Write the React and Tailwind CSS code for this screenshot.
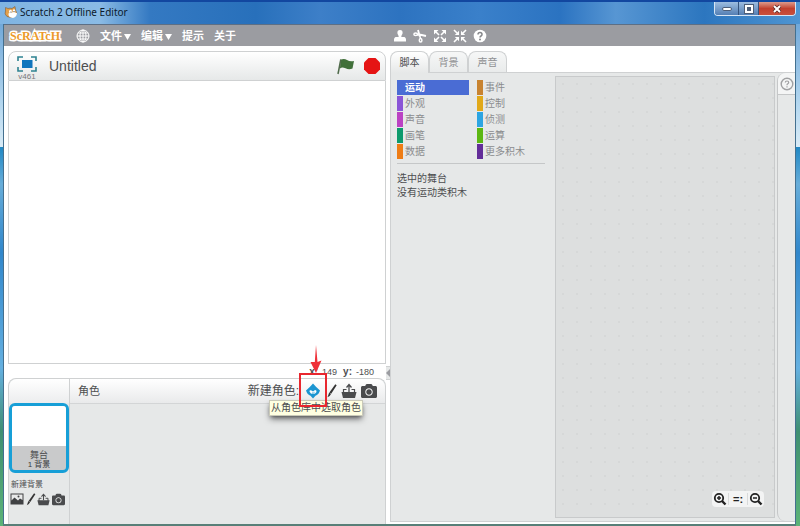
import React, { useState } from "react";
import { FaCamera } from "react-icons/fa";

const leftCategories = [
    { name: "运动", color: "bg-[#4a6cd4]" },
    { name: "外观", color: "bg-[#8a55d7]" },
    { name: "声音", color: "bg-[#bb42c3]" },
    { name: "画笔", color: "bg-[#0e9a6c]" },
    { name: "数据", color: "bg-[#ee7d16]" },
];

const rightCategories = [
    { name: "事件", color: "bg-[#c88330]" },
    { name: "控制", color: "bg-[#e1a91a]" },
    { name: "侦测", color: "bg-[#2ca5e2]" },
    { name: "运算", color: "bg-[#5cb712]" },
    { name: "更多积木", color: "bg-[#632d99]" },
];

const tabs = ["脚本", "背景", "声音"];

function CatIcon() {
    return (
        <svg viewBox="0 0 14 14" className="h-3.5 w-3.5">
            <path d="M1.500 2.500L4 3.500Q6 2.800 8 3.500L11 1.500L11.500 5Q14 8.500 11.500 11Q7 13.500 3 11.500Q0 9 1.500 6Z" fill="#e3a04a" stroke="#7a5a3a" strokeWidth=".6" />
            <path d="M4.500 8.500Q8 6.500 13 8Q13 12 9 13Q4 12.500 4.500 8.500Z" fill="#fff" />
            <ellipse cx="6.500" cy="6.500" rx="1.500" ry="1.800" fill="#fff" />
            <ellipse cx="10" cy="6" rx="1.300" ry="1.700" fill="#fff" />
            <circle cx="7" cy="7" r=".6" fill="#333" />
            <circle cx="10" cy="6.500" r=".6" fill="#333" />
        </svg>
    );
}

function GlobeIcon() {
    return (
        <svg viewBox="0 0 14 14" className="h-3.5 w-3.5" fill="none" stroke="#fff" strokeWidth="1">
            <circle cx="7" cy="7" r="6" />
            <ellipse cx="7" cy="7" rx="3" ry="6" />
            <path d="M7 1V13M1 7H13M2 4H12M2 10H12" />
        </svg>
    );
}

function DownArrow() {
    return (
        <svg viewBox="0 0 7 6" className="h-1.5 w-[7px]">
            <path d="M0 0H7L3.5 6Z" fill="#fff" />
        </svg>
    );
}

function StampIcon() {
    return (
        <svg viewBox="0 0 14 14" className="h-3.5 w-3.5" fill="#fff">
            <path d="M7 1a2.7 2.7 0 0 1 2.6 2.9C9.6 5.4 8.3 5.6 8.3 8H11.500Q13 8.500 13 10.500V12.500H1V10.500Q1 8.500 2.500 8H5.700C5.700 5.600 4.400 5.400 4.400 3.900A2.700 2.700 0 0 1 7 1Z" />
        </svg>
    );
}

function ScissorsIcon() {
    return (
        <svg viewBox="0 0 14 14" className="h-3.5 w-3.5" fill="none" stroke="#fff" strokeWidth="1.500">
            <path d="M5 1 L6.800 7.500 M13 7 L6.500 5.500" strokeWidth="1.800" />
            <path d="M6.800 6 L4 5.800 M6.800 7 L7.500 9.500" />
            <ellipse cx="2.700" cy="5.200" rx="1.800" ry="1.300" />
            <ellipse cx="7.600" cy="11.200" rx="1.300" ry="1.800" />
        </svg>
    );
}

function GrowIcon() {
    return (
        <svg viewBox="0 0 14 14" className="h-3.5 w-3.5">
            <path d="M3 3L6 6M11 3L8 6M3 11L6 8M11 11L8 8" stroke="#fff" strokeWidth="1.600" />
            <path d="M1 1H5.500L1 5.500ZM13 1V5.500L8.500 1ZM1 13V8.500L5.500 13ZM13 13H8.500L13 8.500Z" fill="#fff" />
        </svg>
    );
}

function ShrinkIcon() {
    return (
        <svg viewBox="0 0 14 14" className="h-3.5 w-3.5">
            <path d="M1 1L4 4M13 1L10 4M1 13L4 10M13 13L10 10" stroke="#fff" strokeWidth="1.600" />
            <path d="M6 6H1.800L6 1.800ZM8 6V1.800L12.200 6ZM6 8V12.200L1.800 8ZM8 8H12.200L8 12.200Z" fill="#fff" />
        </svg>
    );
}

function HelpIcon() {
    return (
        <svg viewBox="0 0 14 14" className="h-3.5 w-3.5">
            <circle cx="7" cy="7" r="6.300" fill="#fff" />
            <path d="M5 5.600Q5 3.600 7 3.600T9 5.400Q9 6.400 8 7T7 8.600" fill="none" stroke="#85868a" strokeWidth="1.500" />
            <circle cx="7" cy="10.500" r="1" fill="#85868a" />
        </svg>
    );
}

function FullScreenIcon() {
    return (
        <svg viewBox="0 0 20 16" className="h-4 w-5">
            <path d="M1 5V1H6M14 1H19V5M19 11V15H14M6 15H1V11" fill="none" stroke="#2e8391" strokeWidth="1.600" />
            <rect x="5" y="4" width="10.500" height="8" fill="#0f75bd" />
        </svg>
    );
}

function FlagIcon() {
    return (
        <svg viewBox="0 0 18 17" className="h-[17px] w-[18px]">
            <path d="M3.500 1.800Q7 0 10 2T17 3L15.500 10.500Q12 12 8.500 10.300T3 10.500Z" fill="#41703a" />
            <path d="M3.800 1.500L1 16" stroke="#4f6a4a" strokeWidth="1.500" />
        </svg>
    );
}

function StopIcon() {
    return (
        <svg viewBox="0 0 18 18" className="h-[18px] w-[18px]">
            <path d="M5.500 1H12.500L17 5.500V12.500L12.500 17H5.500L1 12.500V5.500Z" fill="#e51414" />
        </svg>
    );
}

function SpriteIcon() {
    return (
        <svg viewBox="0 0 16 16" className="h-4 w-4">
            <path d="M8 0.500L11.200 4L15 7.500Q13.500 12 10.500 12.700L8 15.500L5.500 12.700Q2.500 12 1 7.500L4.800 4Z" fill="#1b95d1" />
            <path d="M4.500 8.500Q4.500 6.500 6.500 7.500L8 8.500L10 7Q11.800 7 11.500 9Q10.500 11 8 11T4.500 8.500Z" fill="#fff" />
            <path d="M7 10Q8.500 10.500 9.500 9.300" fill="none" stroke="#1b95d1" strokeWidth=".8" />
        </svg>
    );
}

function BrushIcon({ className }) {
    return (
        <svg viewBox="0 0 10 14" className={className}>
            <path d="M8.300 0.300L9.700 1.300L4.200 9.700L2.400 8.500Z" fill="#333" />
            <path d="M2.200 8.600L4 9.900Q3 12 0.500 13.300Z" fill="#333" />
        </svg>
    );
}

function UploadIcon({ className }) {
    return (
        <svg viewBox="0 0 16 16" className={className}>
            <path d="M8 9V2.500M5.500 4.500L8 1.500L10.500 4.500" fill="none" stroke="#4a4b4d" strokeWidth="1.300" />
            <path d="M5.500 6.500H2.500V10M10.500 6.500H13.500V10" fill="none" stroke="#4a4b4d" strokeWidth="1.200" />
            <path d="M.5 9H15.500L14 15H2Z" fill="#4a4b4d" />
        </svg>
    );
}

function PictureIcon() {
    return (
        <svg viewBox="0 0 14 12" className="h-3 w-3.5">
            <rect x=".5" y=".5" width="13" height="11" fill="#404143" />
            <path d="M1.500 1.500H12.500V7L10 5.500L8 7.500L4.500 4.500L1.500 7.500Z" fill="#e9eaea" />
            <circle cx="8.500" cy="3.500" r="1" fill="#404143" />
        </svg>
    );
}

function ZoomIcon({ plus }) {
    return (
        <svg viewBox="0 0 14 14" className="h-3.5 w-3.5" fill="none" stroke="#222">
            <circle cx="6" cy="6" r="4.200" strokeWidth="1.800" />
            <path d="M9 9L12.500 12.500" strokeWidth="2.400" />
            <path d={plus ? "M4 6H8M6 4V8" : "M4 6H8"} strokeWidth="1.500" />
        </svg>
    );
}

function TitleBar() {
    return (
        <header className="flex h-6 items-start justify-between border-t-2 border-[#1247a0] bg-[linear-gradient(90deg,#7fb4e2_0,#8abbe5_100px,#3479c2_150px,#2870bb_32%,#3d7fc8_40%,#2d73c0_50%,#3a80ca_60%,#2b73c1_70%,#5796d3_77%,#2c76bf_88%,#4f95d2_100%)] pl-1">
            <h1 className="flex h-5 items-center gap-0.5 font-['Noto_Sans',sans-serif] text-[10px] text-[#0c1a2c]">
                <CatIcon />
                Scratch 2 Offline Editor
            </h1>
            <div className="mr-1 flex h-3.5 overflow-hidden rounded-b border border-t-0 border-[#d7e6f5]">
                <button aria-label="Minimize" className="flex w-6 items-center justify-center border-r border-[#35537c] bg-gradient-to-b from-[#9dbde0] to-[#547fb4]">
                    <span className="h-1 w-2.5 rounded-sm border border-[#4d5e78] bg-white" />
                </button>
                <button aria-label="Maximize" className="flex w-5 items-center justify-center border-r border-[#35537c] bg-gradient-to-b from-[#9dbde0] to-[#547fb4]">
                    <span className="h-2 w-2 border-2 border-white bg-[#4d5e78] outline outline-[#4d5e78]" />
                </button>
                <button aria-label="Close" className="flex w-9 items-center justify-center bg-gradient-to-b from-[#dc9a8c] via-[#c2402e] to-[#c9503c]">
                    <svg viewBox="0 0 10 10" className="h-2.5 w-2.5">
                        <path d="M2 2L8 8M8 2L2 8" stroke="#5c2a28" strokeWidth="3.600" />
                        <path d="M2 2L8 8M8 2L2 8" stroke="#fff" strokeWidth="2" />
                    </svg>
                </button>
            </div>
        </header>
    );
}

function MenuBar() {
    return (
        <nav className="flex h-[22px] shrink-0 items-center border-t border-[#5d6f85] bg-[#9b9ca1] text-[11px] font-bold text-white">
            <div className="flex w-[389px] shrink-0 items-center pl-1.5">
                <span className="w-[66px] font-['Liberation_Serif',serif] text-xs text-[#ec9a2a] [-webkit-text-stroke:3px_#fff] [paint-order:stroke_fill]">
                    ScRATcH
                </span>
                <button aria-label="语言" className="mr-2.5"><GlobeIcon /></button>
                <button className="mr-2.5 flex items-center gap-0.5 pt-0.5">文件<DownArrow /></button>
                <button className="mr-2.5 flex items-center gap-0.5 pt-0.5">编辑<DownArrow /></button>
                <button className="mr-2.5 pt-0.5">提示</button>
                <button className="pt-0.5">关于</button>
            </div>
            <div className="flex items-center gap-1.5">
                <button aria-label="复制"><StampIcon /></button>
                <button aria-label="删除"><ScissorsIcon /></button>
                <button aria-label="放大"><GrowIcon /></button>
                <button aria-label="缩小"><ShrinkIcon /></button>
                <button aria-label="帮助"><HelpIcon /></button>
            </div>
        </nav>
    );
}

function Stage() {
    return (
        <section className="flex flex-1 flex-col">
            <div className="flex h-[30px] items-center rounded-t-lg border border-[#cfd1d2] bg-gradient-to-b from-white to-[#e6e8e8] pr-1 pl-1.5">
                <button aria-label="全屏" className="flex w-6 flex-col items-center pt-1">
                    <FullScreenIcon />
                    <span className="text-[8px] leading-[9px] text-[#77787a]">v461</span>
                </button>
                <input aria-label="Project name" defaultValue="Untitled" className="ml-2.5 min-w-0 flex-1 bg-transparent text-sm text-[#4d4e50] outline-none" />
                <button aria-label="运行" className="mr-2"><FlagIcon /></button>
                <button aria-label="停止"><StopIcon /></button>
            </div>
            <div className="flex-1 border border-t-0 border-[#cfd1d2] bg-white" />
            <div className="flex h-3.5 items-center justify-end pt-0.5 pr-3 text-[9px] leading-3 text-[#4d4e50]">
                <span className="mr-1 text-[10px] font-bold">x:</span>
                <span>149</span>
                <span className="mr-1 ml-1.5 text-[10px] font-bold">y:</span>
                <span>-180</span>
            </div>
        </section>
    );
}

// Red arrow and frame that point at the sprite library button
function Marker() {
    return (
        <div className="pointer-events-none absolute -top-[38px] -left-1.5 z-10 flex w-7 flex-col items-center">
            <svg viewBox="0 0 12 28" className="ml-1.5 h-7 w-3">
                <path d="M6 0L7.500 17L11.500 15.500L6 28L.5 17L4.800 17Z" fill="#ef3038" />
            </svg>
            <div className="h-[34px] w-7 border-2 border-[#e8272f]" />
        </div>
    );
}

function SpritePane() {
    return (
        <section className="flex h-[146px] shrink-0 rounded-t-lg border border-b-0 border-[#cfd1d2] bg-[#e6e8e8]">
            <div className="w-[61px] shrink-0 border-r border-[#cfd1d2]">
                <div className="h-6 rounded-tl-lg bg-gradient-to-b from-white to-[#ecedee]" />
                <button className="flex h-[70px] w-[60px] flex-col overflow-hidden rounded-md border-3 border-[#179fd7] bg-[#c9cacb]">
                    <span className="h-10 w-full bg-white" />
                    <span className="w-full pt-1 text-center text-[9px] leading-[10px] text-[#4d4e50]">舞台</span>
                    <span className="w-full text-center text-[8px] leading-[10px] text-[#3a3b3d]">1 背景</span>
                </button>
                <p className="pt-1.5 pb-0.5 pl-0.5 text-[8px] leading-3 text-[#4d4e50]">新建背景</p>
                <div className="flex h-3 items-center justify-between pr-1 pl-px">
                    <button aria-label="从背景库中选择背景"><PictureIcon /></button>
                    <button aria-label="绘制新背景"><BrushIcon className="h-[13px] w-2.5" /></button>
                    <button aria-label="从本地文件中上传背景"><UploadIcon className="h-[15px] w-[13px]" /></button>
                    <button aria-label="拍摄照片当作背景"><FaCamera className="h-[15px] w-[13px] text-[#4a4b4d]" /></button>
                </div>
            </div>
            <div className="min-w-0 flex-1">
                <div className="flex h-[25px] items-center rounded-tr-lg border-b border-[#d3d5d6] bg-gradient-to-b from-white to-[#e9eaeb] pr-2 pl-2 text-[11px] text-[#4d4e50]">
                    <h2 className="flex-1">角色</h2>
                    <span className="text-xs">新建角色:</span>
                    <div className="relative ml-1.5 flex items-center">
                        <button aria-label="从角色库中选取角色" className="mr-1.5"><SpriteIcon /></button>
                        <button aria-label="绘制新角色" className="mr-1"><BrushIcon className="h-3.5 w-2.5" /></button>
                        <button aria-label="从本地文件中上传角色" className="mr-1"><UploadIcon className="h-4 w-4" /></button>
                        <button aria-label="拍摄照片当作角色"><FaCamera className="h-4 w-4 text-[#4a4b4d]" /></button>
                        <div role="tooltip" className="absolute top-[17px] -left-9 border border-[#c9c9b8] bg-[#ffffe1] px-px text-[10px] leading-[14px] whitespace-nowrap text-[#4d4e50] shadow-md shadow-black/50">
                            从角色库中选取角色
                        </div>
                        <Marker />
                    </div>
                </div>
            </div>
        </section>
    );
}

function CategoryList({ items, selected, onSelect }) {
    return (
        <ul className="flex flex-col gap-px">
            {items.map((c) => (
                <li key={c.name}>
                    <button onClick={() => onSelect(c.name)} className="flex h-[15px] w-[72px] items-stretch text-[10px] leading-[15px]">
                        <span className={`w-1.5 shrink-0 ${c.color}`} />
                        <span className={selected === c.name ? `flex-1 pl-0.5 text-left font-bold text-white ${c.color}` : "flex-1 pl-0.5 text-left text-[#8b8c8e] whitespace-nowrap"}>
                            {c.name}
                        </span>
                    </button>
                </li>
            ))}
        </ul>
    );
}

function ScriptPane() {
    const [tab, setTab] = useState(0);
    const [category, setCategory] = useState("运动");

    return (
        <section className="flex min-w-0 flex-1 flex-col">
            <div className="flex h-[21px] items-stretch">
                {tabs.map((t, i) => (
                    <button
                        key={i}
                        onClick={() => setTab(i)}
                        className={
                            i === tab
                                ? "relative -mb-px w-[39px] rounded-t-lg border border-b-0 border-[#cfd1d2] bg-gradient-to-b from-white to-[#e6e8e8] text-[10px] text-[#4d4e50]"
                                : "w-[39px] rounded-t-lg border border-b-0 border-[#cfd1d2] bg-gradient-to-b from-[#f6f7f7] to-[#e9ebeb] text-[10px] text-[#8f9092]"
                        }
                    >
                        {t}
                    </button>
                ))}
            </div>
            <div className="flex flex-1 border border-r-0 border-[#cfd1d2] bg-[#e6e8e8]">
                <div className="w-[164px] shrink-0 pt-[7px] pr-2.5 pl-1.5 text-[#4d4e50]">
                    <div className="flex gap-2 border-b border-[#c5c7c8] pb-1">
                        <CategoryList items={leftCategories} selected={category} onSelect={setCategory} />
                        <CategoryList items={rightCategories} selected={category} onSelect={setCategory} />
                    </div>
                    <p className="pt-2 text-[10px] leading-[14px]">选中的舞台<br />没有运动类积木</p>
                </div>
                <div className="my-[3px] flex min-w-0 flex-1 items-end justify-end border border-[#c8cacb] bg-[#dddfdf] bg-[radial-gradient(#d6d8d8_1px,transparent_1px)] bg-[size:14px_14px] px-2.5 pb-2.5">
                    <div className="flex h-4 items-center rounded bg-[#f3f4f4]">
                        <button aria-label="放大积木" className="px-px"><ZoomIcon plus /></button>
                        <button aria-label="恢复大小" className="w-5 border-x border-[#d8dada] text-[11px] leading-3 font-bold text-[#222]">=:</button>
                        <button aria-label="缩小积木" className="px-px"><ZoomIcon /></button>
                    </div>
                </div>
                <aside className="ml-0.5 w-[18px] shrink-0 rounded-l-lg border-l border-[#c5c7c8]">
                    <button aria-label="提示" className="flex h-[22px] w-full items-center justify-center rounded-tl-lg border-b border-[#c5c7c8] bg-[#f4f5f5]">
                        <svg viewBox="0 0 14 14" className="h-3.5 w-3.5" fill="none" stroke="#a0a1a3">
                            <circle cx="7" cy="7" r="5.800" strokeWidth="1.400" />
                            <path d="M5.300 5.600Q5.300 4 7 4T8.700 5.400Q8.700 6.200 7.800 6.700T7 8.200M7 9.200V10.400" strokeWidth="1.200" />
                        </svg>
                    </button>
                </aside>
            </div>
        </section>
    );
}

export default function App() {
    return (
        <div className="flex min-h-screen flex-col bg-[linear-gradient(180deg,#5d9ad2_0,#b5d8f0_20%,#d9ebf6_28%,#2188c4_28%,#67add9_35%,#3187cb_48%,#65b0e0_70%,#3f8f72_82%,#5cb377_100%)] font-['Liberation_Sans','Noto_Sans_CJK_SC',sans-serif]">
            <TitleBar />
            <main className="mr-1 ml-[3px] flex flex-1 flex-col border-x border-[#44708f] bg-white">
                <MenuBar />
                <div className="flex flex-1 pt-[5px]">
                    <div className="ml-1 flex w-[378px] shrink-0 flex-col">
                        <Stage />
                        <SpritePane />
                    </div>
                    <button aria-label="缩小舞台" className="mb-36 flex h-3.5 w-1 shrink-0 items-center self-end border-y border-[#cfd1d2] bg-[#e6e8e8]">
                        <svg viewBox="0 0 4 8" className="h-2 w-1"><path d="M4 0V8L0 4Z" fill="#9b9ca1" /></svg>
                    </button>
                    <div className="mb-0.5 flex min-w-0 flex-1">
                        <ScriptPane />
                    </div>
                </div>
            </main>
            <footer className="mr-1 ml-[3px] h-0.5 bg-[#587f78]" />
        </div>
    );
}
